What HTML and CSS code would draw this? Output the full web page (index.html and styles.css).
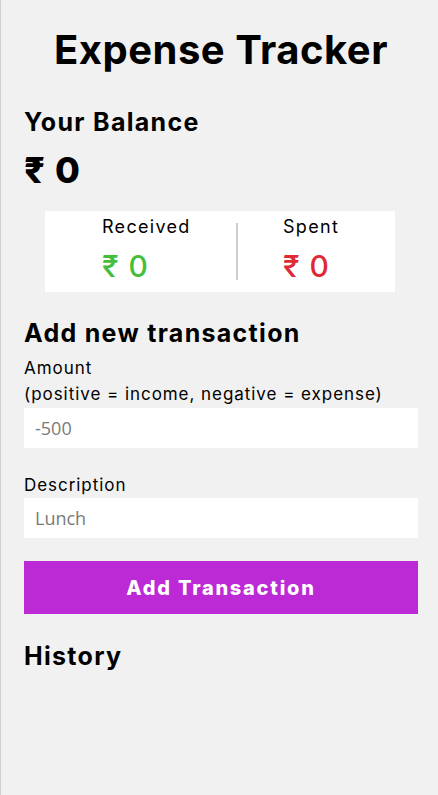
FILE: index.html
```html
<!DOCTYPE html>
<html lang="en">
<head>
<meta charset="utf-8">
<title>Expense Tracker</title>
<link rel="stylesheet" href="styles.css">
</head>
<body>
  <main class="app">
    <h1 class="title">Expense Tracker</h1>
    <h2 class="section-title balance-title">Your Balance</h2>
    <div class="balance">₹ 0</div>

    <div class="summary">
      <div class="summary-col summary-left">
        <div class="summary-label">Received</div>
        <div class="summary-value income">₹ 0</div>
      </div>
      <div class="summary-divider"></div>
      <div class="summary-col summary-right">
        <div class="summary-label">Spent</div>
        <div class="summary-value expense">₹ 0</div>
      </div>
    </div>

    <h2 class="section-title add-title">Add new transaction</h2>
    <form class="form">
      <label class="field-label" for="amount">Amount<br>(positive = income, negative = expense)</label>
      <input class="field-input" id="amount" type="text" placeholder="-500">
      <label class="field-label desc-label" for="desc">Description</label>
      <input class="field-input" id="desc" type="text" placeholder="Lunch">
      <button class="btn" type="button">Add Transaction</button>
    </form>

    <h2 class="section-title history-title">History</h2>
  </main>
</body>
</html>
```

FILE: styles.css
```css
html, body {
  margin: 0;
  padding: 0;
  height: 100%;
}

body {
  background: #f1f1f1;
  border-left: 1px solid #cfcfcf;
  font-family: Inter, "Noto Sans", sans-serif;
  color: #000;
  box-sizing: border-box;
}

.app {
  padding: 0 20px 0 23px;
}

.title {
  margin: 0;
  padding-top: 28px;
  font-size: 40px;
  line-height: 44px;
  font-weight: 700;
  text-align: center;
  letter-spacing: 0.5px;
}

.section-title {
  margin: 0;
  font-size: 25px;
  line-height: 30px;
  font-weight: 700;
  letter-spacing: 1.3px;
}

.balance-title {
  margin-top: 35px;
}

.balance {
  margin-top: 13px;
  font-size: 36px;
  line-height: 40px;
  font-weight: 800;
  letter-spacing: 1px;
}

.summary {
  width: 350px;
  height: 81px;
  margin: 21px 0 0 21px;
  background: #fff;
  display: grid;
  grid-template-columns: 191px 2px 1fr;
  box-sizing: border-box;
}

.summary-col {
  padding-top: 5px;
}

.summary-left {
  padding-left: 57px;
}

.summary-right {
  padding-left: 45px;
}

.summary-label {
  font-size: 18px;
  line-height: 22px;
  font-weight: 400;
  letter-spacing: 1.3px;
}

.summary-value {
  margin-top: 12px;
  font-size: 30px;
  line-height: 32px;
  font-weight: 500;
  letter-spacing: 1px;
}

.income { color: #44be3d; }
.expense { color: #de2a34; }

.summary-divider {
  align-self: center;
  height: 57px;
  background: #cdcdcd;
}

.add-title {
  margin-top: 26px;
}

.form {
  display: flex;
  flex-direction: column;
}

.field-label {
  margin-top: 7px;
  font-size: 17px;
  line-height: 26px;
  letter-spacing: 0.95px;
}

.desc-label {
  margin-top: 24px;
}

.field-input {
  margin: 1px 0 0;
  height: 40px;
  border: none;
  background: #fff;
  padding: 0 11px;
  font-family: "Open Sans", sans-serif;
  font-size: 18px;
  outline: none;
  box-sizing: border-box;
}

.desc-label + .field-input {
  margin-top: 0;
}

.field-input::placeholder {
  color: #7a7a7a;
}

.btn {
  margin-top: 23px;
  height: 53px;
  border: none;
  background: #bb2ad5;
  color: #fff;
  font-family: Inter, sans-serif;
  font-size: 20px;
  font-weight: 800;
  letter-spacing: 1.75px;
  cursor: pointer;
}

.history-title {
  margin-top: 27px;
}
```
